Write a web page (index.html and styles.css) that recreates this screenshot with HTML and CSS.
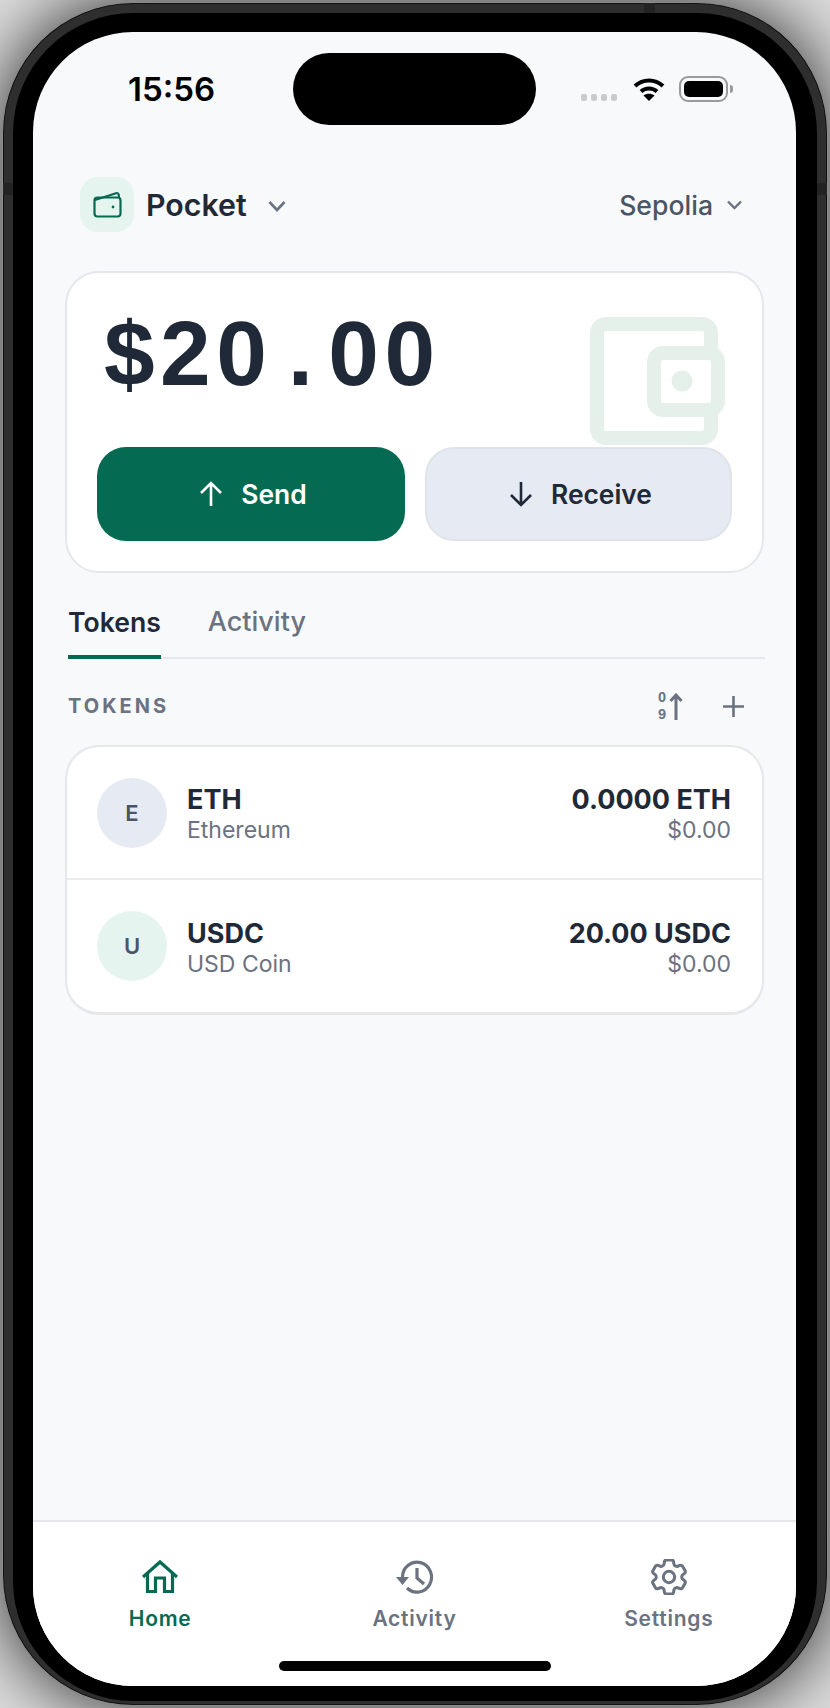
FILE: index.html
```html
<!DOCTYPE html>
<html lang="en">
<head>
  <meta charset="UTF-8" />
  <meta name="viewport" content="width=device-width, initial-scale=1.0"/>
  <title>Pocket</title>
  <link rel="stylesheet" href="styles.css">
</head>
<body>

  <div class="device">
    <span class="band band-top"></span>
    <span class="band band-left"></span>
    <span class="band band-right"></span>
    <div class="bezel">
      <div class="screen">

        <!-- status bar -->
        <div class="island"></div>
        <div class="status">
          <span class="time">15:56</span>
          <div class="status-icons">
            <div class="dots"><i></i><i></i><i></i><i></i></div>
            <svg class="wifi" width="32" height="24" viewBox="0 0 32 24">
              <path d="M2 9C10 1.500 22 1.500 30 9" fill="none" stroke="#000" stroke-width="4"/>
              <path d="M8 14.500C12.500 10.500 19.500 10.500 24 14.500" fill="none" stroke="#000" stroke-width="4"/>
              <path d="M16 24L10.500 18.500C13.500 16 18.500 16 21.500 18.500Z" fill="#000"/>
            </svg>
            <div class="battery"><div class="battery-fill"></div></div>
            <div class="battery-cap"></div>
          </div>
        </div>

        <!-- wallet and network -->
        <div class="header">
          <div class="wallet-switch">
            <div class="wallet-tile">
              <svg width="30" height="27" viewBox="0 0 30 27" fill="none" stroke="#046a52" stroke-width="2.200" stroke-linejoin="round">
                <path d="M3 9L24 2.200C25.500 1.800 26.500 2.600 26.800 4L27 6.500"/>
                <rect x="2.500" y="6.500" width="26" height="19" rx="3"/>
                <circle cx="21" cy="16" r="1.400" fill="#046a52" stroke="none"/>
              </svg>
            </div>
            <span class="wallet-name">Pocket</span>
            <svg class="chevron-big" width="18" height="12" viewBox="0 0 18 12" fill="none" stroke="#6b7280" stroke-width="2.600"><path d="M1.500 2L9 10L16.500 2"/></svg>
          </div>
          <div class="network">
            <span>Sepolia</span>
            <svg width="15" height="10" viewBox="0 0 15 10" fill="none" stroke="#6b7280" stroke-width="2.400"><path d="M1 1.500L7.500 8L14 1.500"/></svg>
          </div>
        </div>

        <!-- balance -->
        <div class="balance-card">
          <svg class="balance-bg" width="135" height="128" viewBox="0 0 135 128">
            <rect x="7" y="7" width="114" height="114" rx="9" fill="none" stroke="#e5f0eb" stroke-width="14"/>
            <rect x="64" y="36" width="64" height="57" rx="9" fill="#fff" stroke="#e5f0eb" stroke-width="14"/>
            <circle cx="92" cy="64" r="10.500" fill="#e5f0eb"/>
          </svg>
          <div class="amount">$20<span class="amount-dot">.</span>00</div>
          <div class="actions">
            <button class="btn btn-send">
              <svg width="24" height="26" viewBox="0 0 24 26" fill="none" stroke="#fff" stroke-width="2.600"><path d="M12 25V2M2 12L12 2L22 12"/></svg>
              Send
            </button>
            <button class="btn btn-receive">
              <svg width="24" height="26" viewBox="0 0 24 26" fill="none" stroke="#1f2937" stroke-width="2.600"><path d="M12 1V24M2 14L12 24L22 14"/></svg>
              Receive
            </button>
          </div>
        </div>

        <!-- tabs -->
        <div class="tabs">
          <div class="tab tab-active">Tokens</div>
          <div class="tab">Activity</div>
        </div>

        <div class="section-head">
          <span class="section-title">TOKENS</span>
          <div class="section-tools">
            <div class="sort-icon">
              <div class="sort-digits"><span>0</span><span>9</span></div>
              <svg width="14" height="27" viewBox="0 0 14 27" fill="none" stroke="#6b7280" stroke-width="3"><path d="M7 27V2M1.500 8L7 2L12.500 8"/></svg>
            </div>
            <svg width="21" height="21" viewBox="0 0 21 21" fill="none" stroke="#6b7280" stroke-width="2.600"><path d="M10.500 0V21M0 10.500H21"/></svg>
          </div>
        </div>

        <!-- token list -->
        <div class="token-list">
          <div class="token-row">
            <div class="avatar avatar-gray">E</div>
            <div class="token-info">
              <div class="token-main">ETH</div>
              <div class="token-sub">Ethereum</div>
            </div>
            <div class="token-value">
              <div class="token-main">0.0000 ETH</div>
              <div class="token-sub">$0.00</div>
            </div>
          </div>
          <div class="token-row">
            <div class="avatar avatar-green">U</div>
            <div class="token-info">
              <div class="token-main">USDC</div>
              <div class="token-sub">USD Coin</div>
            </div>
            <div class="token-value">
              <div class="token-main">20.00 USDC</div>
              <div class="token-sub">$0.00</div>
            </div>
          </div>
        </div>

        <!-- bottom navigation -->
        <div class="tabbar">
          <div class="nav-item nav-active">
            <svg width="36" height="36" viewBox="0 0 36 36" fill="none" stroke="#046a52" stroke-width="3.200">
              <path d="M1 18L18 3L35 18"/>
              <path d="M5.500 15V32.500H13.500V19H22.500V32.500H30.500V15"/>
            </svg>
            <span>Home</span>
          </div>
          <div class="nav-item">
            <svg width="40" height="36" viewBox="0 0 40 36" fill="none" stroke="#6b7280" stroke-width="3.200">
              <path d="M8.500 18A14.500 15 0 1 1 13 29"/>
              <path d="M2 18H15L8.500 26Z" fill="#6b7280" stroke="none"/>
              <path d="M23 9V19L30 25"/>
            </svg>
            <span>Activity</span>
          </div>
          <div class="nav-item">
            <svg width="36" height="36" viewBox="2.500 2.500 19 19" fill="none" stroke="#6b7280" stroke-width="1.600">
              <path d="M9.594 3.940c.09-.542.560-.940 1.110-.940h2.593c.550 0 1.020.398 1.110.940l.213 1.281c.063.374.313.686.645.870.074.040.147.083.220.127.325.196.720.257 1.075.124l1.217-.456a1.125 1.125 0 0 1 1.370.490l1.296 2.247a1.125 1.125 0 0 1-.260 1.431l-1.003.827c-.293.241-.438.613-.430.992a7.723 7.723 0 0 1 0 .255c-.008.378.137.750.430.991l1.004.827c.424.350.534.955.260 1.430l-1.298 2.247a1.125 1.125 0 0 1-1.369.491l-1.217-.456c-.355-.133-.750-.072-1.076.124a6.470 6.470 0 0 1-.220.128c-.331.183-.581.495-.644.869l-.213 1.281c-.090.543-.560.940-1.110.940h-2.594c-.550 0-1.019-.398-1.110-.940l-.213-1.281c-.062-.374-.312-.686-.644-.870a6.520 6.520 0 0 1-.220-.127c-.325-.196-.720-.257-1.076-.124l-1.217.456a1.125 1.125 0 0 1-1.369-.490l-1.297-2.247a1.125 1.125 0 0 1 .260-1.431l1.004-.827c.292-.240.437-.613.430-.991a6.932 6.932 0 0 1 0-.255c.007-.380-.138-.751-.430-.992l-1.004-.827a1.125 1.125 0 0 1-.260-1.430l1.297-2.247a1.125 1.125 0 0 1 1.370-.491l1.216.456c.356.133.751.072 1.076-.124.072-.044.146-.086.220-.128.332-.183.582-.495.644-.869l.214-1.280Z"/>
              <circle cx="12" cy="12" r="3"/>
            </svg>
            <span>Settings</span>
          </div>
        </div>
        <div class="home-bar"></div>

      </div>
    </div>
  </div>

</body>
</html>
```

FILE: styles.css
```css
/* page and phone frame */
* {
  box-sizing: border-box;
}

body {
  margin: 0;
  width: 830px;
  height: 1708px;
  padding: 2px;
  background: #dedede;
  overflow: hidden;
  font-family: Inter, "Liberation Sans", sans-serif;
  color: #1f2937;
}

.device {
  position: relative;
  width: 826px;
  height: 1704px;
  padding: 10px 10px 4px 10px;
  border: 1px solid #8c8c8c;
  border-radius: 131px;
  background: #2e2e2e;
  box-shadow: 0 0 70px 2px rgba(0, 0, 0, 0.8), inset 0 0 0 1px #111;
}

.band {
  position: absolute;
  background: #232323;
}

.band-top {
  top: 0;
  left: 641px;
  width: 11px;
  height: 10px;
}

.band-left {
  top: 180px;
  left: 0;
  width: 10px;
  height: 12px;
}

.band-right {
  top: 180px;
  right: 0;
  width: 10px;
  height: 12px;
}

.bezel {
  height: 100%;
  padding: 19px 21px 15px 20px;
  border-radius: 120px;
  background: #000;
}

.screen {
  position: relative;
  display: flex;
  flex-direction: column;
  height: 100%;
  padding: 0 32px;
  overflow: hidden;
  border-radius: 100px;
  background: #f8f9fb;
}

/* status bar */
.island {
  position: absolute;
  top: 21px;
  left: 260px;
  width: 243px;
  height: 72px;
  border-radius: 36px;
  background: #000;
}

.status {
  display: flex;
  align-items: center;
  justify-content: space-between;
  flex: none;
  height: 72px;
  margin-top: 21px;
  padding: 0 31px 0 63px;
}

.time {
  font-size: 33px;
  font-weight: 600;
  color: #000;
}

.status-icons {
  display: flex;
  align-items: center;
}

.dots {
  display: flex;
  gap: 4px;
  margin: 16px 16px 0 0;
}

.dots i {
  width: 6px;
  height: 7px;
  border-radius: 2px;
  background: #cbcbcb;
}

.wifi {
  margin-right: 14px;
}

.battery {
  width: 49px;
  height: 26px;
  padding: 3px;
  border: 2px solid #9a9a9a;
  border-radius: 9px;
}

.battery-fill {
  height: 100%;
  border-radius: 5px;
  background: #000;
}

.battery-cap {
  width: 3px;
  height: 8px;
  margin-left: 2px;
  border-radius: 0 3px 3px 0;
  background: #9a9a9a;
}

/* header */
.header {
  display: flex;
  align-items: center;
  justify-content: space-between;
  flex: none;
  height: 55px;
  margin-top: 52px;
  padding: 0 22px 0 15px;
}

.wallet-switch {
  display: flex;
  align-items: center;
}

.wallet-tile {
  display: flex;
  align-items: center;
  justify-content: center;
  width: 54px;
  height: 55px;
  border-radius: 18px;
  background: #e6f4ef;
}

.wallet-name {
  margin-left: 12px;
  font-size: 30.300px;
  font-weight: 600;
}

.chevron-big {
  margin: 2px 0 0 21px;
}

.network {
  display: flex;
  align-items: center;
  gap: 14px;
  font-size: 26.600px;
  font-weight: 500;
  color: #4b5563;
}

/* balance card */
.balance-card {
  position: relative;
  flex: none;
  height: 302px;
  margin-top: 39px;
  padding: 31px 30px 0 30px;
  border: 2px solid #e5e7eb;
  border-radius: 34px;
  background: #fff;
}

.balance-bg {
  position: absolute;
  top: 44px;
  right: 37px;
}

.amount {
  position: relative;
  height: 143px;
  margin-left: 7px;
  font-family: "Liberation Sans", sans-serif;
  font-size: 91px;
  font-weight: 700;
  letter-spacing: 5.500px;
  line-height: 100px;
}

.amount-dot {
  display: inline-block;
  width: 56px;
  letter-spacing: 0;
  text-align: center;
}

.actions {
  position: relative;
  display: grid;
  grid-template-columns: 308px 307px;
  gap: 20px;
}

.btn {
  display: flex;
  align-items: center;
  justify-content: center;
  gap: 18px;
  height: 94px;
  padding: 0 0 0 4px;
  border: 0;
  border-radius: 29px;
  font-family: inherit;
  font-size: 26.400px;
  font-weight: 600;
}

.btn-send {
  background: #046a52;
  color: #fff;
}

.btn-receive {
  border: 2px solid #e0e4ea;
  background: #e6eaf2;
  color: #1f2937;
}

/* tabs */
.tabs {
  display: flex;
  flex: none;
  gap: 47px;
  height: 86px;
  margin: 0 -1px 0 3px;
  padding-top: 27px;
  border-bottom: 2px solid #e5e7eb;
}

.tab {
  height: 59px;
  font-size: 27px;
  font-weight: 500;
  line-height: 44px;
  color: #6b7280;
}

.tab-active {
  border-bottom: 4px solid #046a52;
  font-size: 26.600px;
  font-weight: 600;
  color: #1f2937;
}

.section-head {
  display: flex;
  align-items: center;
  justify-content: space-between;
  flex: none;
  height: 86px;
  padding: 8px 20px 0 3px;
}

.section-title {
  font-size: 20px;
  font-weight: 700;
  letter-spacing: 3px;
  color: #6b7280;
}

.section-tools {
  display: flex;
  align-items: center;
  gap: 40px;
}

.sort-icon {
  display: flex;
  align-items: center;
  gap: 3px;
}

.sort-digits {
  display: flex;
  flex-direction: column;
  font-family: "Liberation Sans", sans-serif;
  font-size: 14.500px;
  font-weight: 700;
  line-height: 17px;
  color: #6b7280;
}

/* token list */
.token-list {
  flex: none;
  height: 270px;
  border: 2px solid #e5e7eb;
  border-bottom-width: 3px;
  border-radius: 34px;
  background: #fff;
}

.token-row {
  display: flex;
  align-items: center;
  height: 131px;
  padding: 0 31px 0 30px;
}

.token-row + .token-row {
  height: 134px;
  border-top: 2px solid #e9ebef;
}

.avatar {
  display: flex;
  align-items: center;
  justify-content: center;
  flex: none;
  width: 70px;
  height: 70px;
  border-radius: 50%;
  font-size: 22px;
  font-weight: 600;
  color: #4b5563;
}

.avatar-gray {
  background: #e6eaf2;
}

.avatar-green {
  background: #e6f4ef;
}

.token-info {
  flex: 1;
  margin-left: 20px;
  padding-top: 4px;
}

.token-value {
  padding-top: 4px;
  text-align: right;
}

.token-main {
  font-size: 27px;
  font-weight: 700;
  line-height: 31px;
}

.token-sub {
  font-size: 23px;
  line-height: 30px;
  color: #6b7280;
}

/* bottom navigation */
.tabbar {
  display: grid;
  grid-template-columns: repeat(3, 1fr);
  flex: none;
  height: 166px;
  margin: auto -32px 0 -32px;
  padding-top: 37px;
  border-top: 2px solid #e5e7eb;
  background: #fff;
}

.nav-item {
  display: flex;
  flex-direction: column;
  align-items: center;
  gap: 11px;
  font-size: 21px;
  font-weight: 600;
  line-height: 26px;
  letter-spacing: 0.750px;
  color: #6b7280;
}

.nav-active {
  color: #046a52;
}

.home-bar {
  position: absolute;
  bottom: 15px;
  left: 246px;
  width: 272px;
  height: 10px;
  border-radius: 5px;
  background: #000;
}
```
